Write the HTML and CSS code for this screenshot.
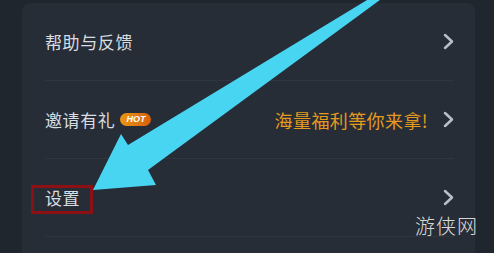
FILE: index.html
```html
<!DOCTYPE html>
<html lang="zh-CN">

<head>
    <meta charset="UTF-8">
    <meta name="viewport" content="width=device-width, initial-scale=1.0">
    <title>我的 - 设置</title>
    <link rel="stylesheet" href="styles.css">
</head>

<body>
    <div class="page">
        <div class="card">
            <!-- 帮助与反馈 -->
            <div class="row">
                <span class="label">帮助与反馈</span>
                <svg class="chevron" width="11" height="17" viewBox="0 0 11 17">
                    <polyline points="2,2 9,8.5 2,15" />
                </svg>
            </div>

            <!-- 邀请有礼 -->
            <div class="row">
                <span class="label">邀请有礼</span>
                <span class="hot">HOT</span>
                <span class="promo">海量福利等你来拿!</span>
                <svg class="chevron" width="11" height="17" viewBox="0 0 11 17">
                    <polyline points="2,2 9,8.5 2,15" />
                </svg>
            </div>

            <!-- 设置 -->
            <div class="row">
                <span class="label">设置</span>
                <svg class="chevron" width="11" height="17" viewBox="0 0 11 17">
                    <polyline points="2,2 9,8.5 2,15" />
                </svg>
            </div>
        </div>
    </div>

    <!-- 标注：箭头和红框 -->
    <svg class="arrow" width="494" height="253" viewBox="0 0 494 253">
        <polygon points="93,190 121,134 128,145 372,-3 384,-3 148,170 156,185" />
    </svg>
    <div class="highlight"></div>

    <div class="watermark">游侠网</div>
</body>

</html>
```

FILE: styles.css
```css
body {
    margin: 0;
    background-color: #1f252c;
    font-family: "Noto Sans CJK SC", "Noto Sans", sans-serif;
    overflow: hidden;
}

.page {
    height: 250px;
    padding: 3px 19px 0 22px;
    background-color: #20262d;
}

.card {
    background-color: #272d36;
    border-radius: 8px 8px 0 0;
    padding: 0 21px 0 23px;
    height: 250px;
}

.row {
    display: flex;
    align-items: center;
    height: 77px;
    border-bottom: 1px solid #30363f;
}

.label {
    font-size: 17px;
    color: #d8dde2;
    letter-spacing: 0.6px;
}

.hot {
    margin-left: 5px;
    width: 31px;
    height: 13px;
    line-height: 13px;
    border-radius: 7px;
    background: linear-gradient(90deg, #eb9714, #d6600d);
    color: #fff;
    font-family: "Liberation Sans", Arial, sans-serif;
    font-size: 9px;
    font-weight: bold;
    font-style: italic;
    text-align: center;
}

.promo {
    margin-left: auto;
    margin-right: 15px;
    font-size: 18px;
    letter-spacing: 0.4px;
    color: #e39a1f;
}

.chevron {
    margin-left: auto;
}

.promo + .chevron {
    margin-left: 0;
}

.chevron polyline {
    fill: none;
    stroke: #b9bfc7;
    stroke-width: 2.5;
    stroke-linecap: round;
    stroke-linejoin: round;
}

.arrow {
    position: absolute;
    left: 0;
    top: 0;
}

.arrow polygon {
    fill: #47d5f2;
}

.highlight {
    position: absolute;
    left: 31px;
    top: 185px;
    width: 56px;
    height: 23px;
    border: 3px solid #8c1014;
}

.watermark {
    position: absolute;
    left: 415px;
    top: 211px;
    font-size: 20px;
    font-weight: 300;
    color: rgba(240, 240, 240, 0.9);
    letter-spacing: 1px;
}
```
